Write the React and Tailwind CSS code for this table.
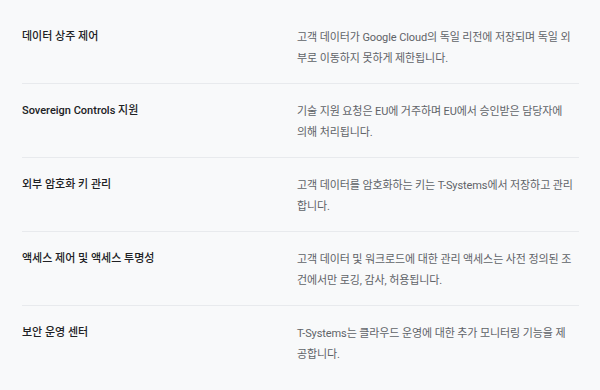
const rows = [
  {
    title: "데이터 상주 제어",
    desc: "고객 데이터가 Google Cloud의 독일 리전에 저장되며 독일 외부로 이동하지 못하게 제한됩니다.",
    pad: "pr-[4px]",
  },
  {
    title: "Sovereign Controls 지원",
    desc: "기술 지원 요청은 EU에 거주하며 EU에서 승인받은 담당자에 의해 처리됩니다.",
    pad: "pr-[9px]",
  },
  {
    title: "외부 암호화 키 관리",
    desc: "고객 데이터를 암호화하는 키는 T-Systems에서 저장하고 관리합니다.",
    pad: "pr-[4px]",
  },
  {
    title: "액세스 제어 및 액세스 투명성",
    desc: "고객 데이터 및 워크로드에 대한 관리 액세스는 사전 정의된 조건에서만 로깅, 감사, 허용됩니다.",
    pad: "pr-[4px]",
  },
  {
    title: "보안 운영 센터",
    desc: "T-Systems는 클라우드 운영에 대한 추가 모니터링 기능을 제공합니다.",
    pad: "pr-[4px]",
  },
];

export default function App() {
  return (
    <div
      className="min-h-[390px] bg-[#f8f9fa] pl-[22px] pr-[21px] pt-[10px]"
      style={{ fontFamily: 'Roboto, "Noto Sans CJK KR", sans-serif' }}
    >
      {rows.map((r, i) => (
        <div
          key={i}
          className={`grid grid-cols-[275px_1fr] pt-[17px] pb-[14px] ${
            i < rows.length - 1 ? "border-b border-[#e8eaed]" : ""
          }`}
        >
          <div className="text-[11px] leading-[21px] font-medium text-[#202124] -mt-[1px]">
            {r.title}
          </div>
          <div className={`text-[11px] leading-[21px] tracking-[-0.1px] text-[#5f6368] ${r.pad}`}>
            {r.desc}
          </div>
        </div>
      ))}
    </div>
  );
}
